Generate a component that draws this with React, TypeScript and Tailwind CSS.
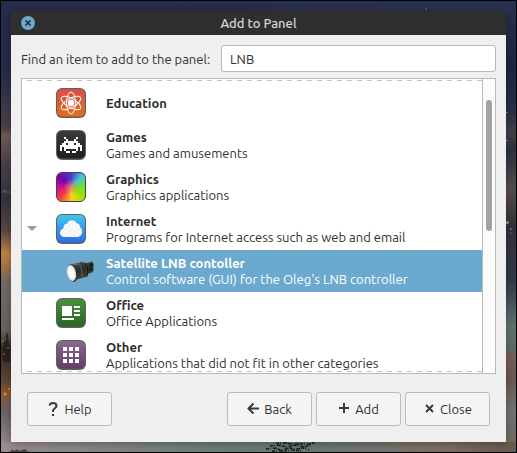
import { useState, type ReactNode } from "react";

function Tile({ id, from, to, children }: { id: string; from: string; to: string; children: ReactNode }) {
  return (
    <svg viewBox="0 0 30 30" className="h-[30px] w-[30px] shrink-0" aria-hidden="true">
      <defs>
        <linearGradient id={id} x1="0" y1="0" x2="0" y2="1">
          <stop offset="0" stopColor={from} />
          <stop offset="1" stopColor={to} />
        </linearGradient>
      </defs>
      <rect width="30" height="30" rx="6" fill="#2b2b2b" opacity="0.75" />
      <rect x="1" y="1" width="28" height="27.5" rx="5" fill={`url(#${id})`} />
      {children}
    </svg>
  );
}

function EducationIcon() {
  return (
    <Tile id="edu" from="#d5504a" to="#df6e1c">
      <g fill="none" stroke="#fff" strokeWidth="1">
        <ellipse cx="15" cy="15" rx="4.5" ry="11" />
        <ellipse cx="15" cy="15" rx="4.5" ry="11" transform="rotate(60 15 15)" />
        <ellipse cx="15" cy="15" rx="4.5" ry="11" transform="rotate(-60 15 15)" />
      </g>
      <circle cx="15" cy="15" r="3.2" fill="#fff" />
    </Tile>
  );
}

const INVADER = [
  "00100000100",
  "00010001000",
  "00111111100",
  "01101110110",
  "11111111111",
  "10111111101",
  "10100000101",
  "00011011000",
];

function GamesIcon() {
  return (
    <Tile id="games" from="#3a3a3a" to="#1f1f1f">
      <g fill="#fff" shapeRendering="crispEdges">
        {INVADER.flatMap((line, y) =>
          [...line].map((bit, x) =>
            bit === "1" ? <rect key={`${x}-${y}`} x={4 + x * 2} y={7 + y * 2} width="2" height="2" /> : null,
          ),
        )}
      </g>
    </Tile>
  );
}

function GraphicsIcon() {
  return (
    <div className="h-[30px] w-[30px] shrink-0 rounded-[6px] border border-[#444] bg-[radial-gradient(circle,#d98a70_0%,transparent_40%),conic-gradient(#4838cc,#45c4dc_45deg,#62e040_80deg,#98e400_130deg,#ffd424_175deg,#f0403c_225deg,#d8108c_265deg,#7800b0_310deg,#4838cc)]" />
  );
}

function InternetIcon() {
  return (
    <Tile id="net" from="#42c6ee" to="#2a6ee8">
      <path
        d="M8.5 23C5.8 23 4 21 4 18.7c0-2.2 1.5-3.8 3.400-4.300-.1-2.900 1.600-4.900 4-4.900.6-2 2.300-3.200 4.600-3.200 2.100 0 3.600 1 4.300 2.700 2.300.2 3.900 1.900 3.800 4.300 1.300.7 2 2.200 2 4.200 0 3.100-1.900 5.500-4.900 5.500z"
        fill="#f5f5f5"
      />
    </Tile>
  );
}

function SatelliteIcon() {
  return (
    <svg viewBox="0 0 30 30" className="h-[30px] w-[30px] shrink-0" aria-hidden="true">
      <defs>
        <linearGradient id="body" x1="0" y1="0" x2="0.3" y2="1">
          <stop offset="0" stopColor="#555852" />
          <stop offset="0.5" stopColor="#292b28" />
          <stop offset="1" stopColor="#454744" />
        </linearGradient>
        <radialGradient id="lens">
          <stop offset="0" stopColor="#fff" />
          <stop offset="0.7" stopColor="#f0f4f4" />
          <stop offset="1" stopColor="#c0c8ca" />
        </radialGradient>
      </defs>
      <path d="M4 8.500l8-1.500 3-1 6 1 5-1.500 1.500 1.500v8l-1.500 1.500-3.500 1-1 3-5.500 1.500-5 1.500-3 2.500z" fill="url(#body)" />
      <path d="M13 7.500l2.500 5.500.5 8" fill="none" stroke="#6d706b" strokeWidth="0.8" />
      <path d="M19 7.500l2.500 4v8" fill="none" stroke="#151615" strokeWidth="0.8" />
      <path d="M4 9.500l8-1.500" stroke="#81847e" strokeWidth="0.7" />
      <ellipse cx="25.500" cy="9" rx="1.100" ry="1.500" fill="#0c0c0c" />
      <ellipse cx="24.500" cy="13.500" rx="1.200" ry="1" fill="#0c0c0c" />
      <ellipse cx="6.300" cy="17" rx="5.100" ry="9" transform="rotate(-12 6.300 17)" fill="#30332f" />
      <ellipse cx="5.400" cy="17" rx="4.500" ry="8.300" transform="rotate(-12 5.400 17)" fill="url(#lens)" />
    </svg>
  );
}

function OfficeIcon() {
  return (
    <Tile id="office" from="#46913d" to="#2b6526">
      <path d="M6 8h10v10H6zM18 8h6v2h-6zM18 12h6v2h-6zM18 16h6v2h-6zM6 20h12v2H6z" fill="#fff" />
    </Tile>
  );
}

function OtherIcon() {
  return (
    <Tile id="other" from="#88698c" to="#653c69">
      <path
        d="M7 7h4v4H7zM13 7h4v4h-4zM19 7h4v4h-4zM7 13h4v4H7zM13 13h4v4h-4zM19 13h4v4h-4zM7 19h4v4H7zM13 19h4v4h-4zM19 19h4v4h-4z"
        fill="#fff"
      />
    </Tile>
  );
}

type Item = { name: string; note?: string; icon: ReactNode; open?: boolean; child?: boolean };

const ITEMS: Item[] = [
  { name: "Education", icon: <EducationIcon /> },
  { name: "Games", note: "Games and amusements", icon: <GamesIcon /> },
  { name: "Graphics", note: "Graphics applications", icon: <GraphicsIcon /> },
  { name: "Internet", note: "Programs for Internet access such as web and email", icon: <InternetIcon />, open: true },
  {
    name: "Satellite LNB contoller",
    note: "Control software (GUI) for the Oleg's LNB controller",
    icon: <SatelliteIcon />,
    child: true,
  },
  { name: "Office", note: "Office Applications", icon: <OfficeIcon /> },
  { name: "Other", note: "Applications that did not fit in other categories", icon: <OtherIcon /> },
];

function Row({ item, selected, onSelect }: { item: Item; selected: boolean; onSelect: () => void }) {
  return (
    <li
      role="treeitem"
      aria-selected={selected}
      aria-expanded={item.open}
      onClick={onSelect}
      className={`flex h-[42px] shrink-0 items-center ${selected ? "bg-[#6ba9cf] text-white" : ""}`}
    >
      <span className="flex w-[34px] shrink-0 pl-[5px]">
        {item.open && (
          <svg viewBox="0 0 10 6" className="h-[6px] w-[10px]" aria-hidden="true">
            <path d="M0 0h10L5 5z" fill="#999" />
          </svg>
        )}
      </span>
      <span className={`flex w-[50px] shrink-0 ${item.child ? "pl-[10px]" : ""}`}>{item.icon}</span>
      <span className="flex min-w-0 flex-col whitespace-nowrap leading-4">
        <span className="font-bold">{item.name}</span>
        {item.note && <span>{item.note}</span>}
      </span>
    </li>
  );
}

function ActionButton({ icon, label }: { icon: ReactNode; label: string }) {
  return (
    <button
      type="button"
      className="flex h-[34px] w-[85px] items-center justify-center gap-[5px] rounded-[3px] border border-[#bcbcbc] bg-[#f5f5f5]"
    >
      <svg viewBox="0 0 12 14" className="h-[14px] w-[12px]" fill="none" stroke="#3a3a3a" strokeWidth="2" aria-hidden="true">
        {icon}
      </svg>
      {label}
    </button>
  );
}

function Wallpaper() {
  return (
    <svg viewBox="0 0 517 453" preserveAspectRatio="none" className="absolute inset-0 h-full w-full" aria-hidden="true">
      <defs>
        <linearGradient id="west" x1="0" y1="0" x2="0" y2="1">
          <stop offset="0" stopColor="#272d49" />
          <stop offset="0.15" stopColor="#242b46" />
          <stop offset="0.24" stopColor="#3b3b4d" />
          <stop offset="0.28" stopColor="#4b4044" />
          <stop offset="0.3" stopColor="#705b55" />
          <stop offset="0.36" stopColor="#494147" />
          <stop offset="0.44" stopColor="#333341" />
          <stop offset="0.51" stopColor="#5c4740" />
          <stop offset="0.56" stopColor="#bc8540" />
          <stop offset="0.59" stopColor="#a47440" />
          <stop offset="0.62" stopColor="#706b66" />
          <stop offset="0.73" stopColor="#67625b" />
          <stop offset="0.77" stopColor="#302a27" />
          <stop offset="0.84" stopColor="#5e4532" />
          <stop offset="0.87" stopColor="#8b5a36" />
          <stop offset="0.91" stopColor="#686369" />
          <stop offset="1" stopColor="#a29192" />
        </linearGradient>
        <linearGradient id="east" x1="0" y1="0" x2="0" y2="1">
          <stop offset="0" stopColor="#293150" />
          <stop offset="0.15" stopColor="#1c2541" />
          <stop offset="0.25" stopColor="#29304a" />
          <stop offset="0.29" stopColor="#414146" />
          <stop offset="0.33" stopColor="#29313e" />
          <stop offset="0.42" stopColor="#564c4d" />
          <stop offset="0.5" stopColor="#332f3d" />
          <stop offset="0.62" stopColor="#303a48" />
          <stop offset="0.72" stopColor="#5d7370" />
          <stop offset="0.76" stopColor="#5c6c6b" />
          <stop offset="0.79" stopColor="#765d56" />
          <stop offset="0.84" stopColor="#6a5850" />
          <stop offset="0.9" stopColor="#6d7470" />
          <stop offset="1" stopColor="#77685d" />
        </linearGradient>
        <linearGradient id="south">
          <stop offset="0" stopColor="#9b8c8f" />
          <stop offset="0.25" stopColor="#7d8283" />
          <stop offset="0.45" stopColor="#697c7a" />
          <stop offset="0.65" stopColor="#6b7773" />
          <stop offset="0.85" stopColor="#806e65" />
          <stop offset="1" stopColor="#67594f" />
        </linearGradient>
        <linearGradient id="sky">
          <stop offset="0" stopColor="#272d49" />
          <stop offset="1" stopColor="#293150" />
        </linearGradient>
      </defs>
      <rect width="260" height="453" fill="url(#west)" />
      <rect x="257" width="260" height="453" fill="url(#east)" />
      <rect width="517" height="11" fill="url(#sky)" />
      <rect y="442" width="517" height="11" fill="url(#south)" />
      <path d="M3 362v-14l1-1v-6h2v-6l1-3 1 3v6h1v6l1 1v14z" fill="#241d1a" opacity="0.8" />
      <g fill="#e9a04d" opacity="0.8">
        <circle cx="5" cy="394" r="1.5" />
        <circle cx="9" cy="389" r="1" />
        <circle cx="3" cy="341" r="0.8" />
        <circle cx="8" cy="348" r="0.8" />
        <circle cx="4" cy="354" r="0.8" />
      </g>
      <path d="M2 192h2v-2h1v2h6" fill="none" stroke="#80597f" strokeWidth="0.8" />
      <g fill="#d3a59b" opacity="0.8">
        <circle cx="507" cy="112.500" r="0.8" />
        <circle cx="507" cy="140.500" r="0.8" />
        <circle cx="507.500" cy="222.500" r="1.500" />
        <circle cx="511" cy="229" r="0.8" />
        <circle cx="511" cy="233" r="0.6" />
        <circle cx="426" cy="9" r="1" fill="#5b6480" />
      </g>
      <g fill="none" stroke="#171c1d" strokeWidth="1.500" strokeDasharray="3 1 1 2 4 1">
        <path d="M276 443h10l5 1h20l4-2" />
        <path d="M270 446l8-1 9 2 8-2 9 2 7-2" />
        <path d="M266 449l9-1 6 2 8-2 7 1 8-1 5 2" />
        <path d="M272 451h12l7-1 11 1" />
      </g>
      <path d="M8 452l3-1 1-2 2 2 4-2 1 2 6-2 2 2 3 1z" fill="#3b3335" opacity="0.8" />
    </svg>
  );
}

const DASHES =
  "pointer-events-none absolute inset-x-0 h-px bg-[repeating-linear-gradient(90deg,transparent_0_5px,#c4c4c4_5px_10px)]";

export default function App() {
  const [query, setQuery] = useState("LNB");
  const [selected, setSelected] = useState(4);
  return (
    <div className="relative flex h-screen overflow-hidden p-[11px] font-['Ubuntu','Noto_Sans',sans-serif] text-[13px] leading-4 text-[#303030]">
      <Wallpaper />
      <div className="pointer-events-none absolute inset-0 border border-black" />
      <main className="relative flex min-w-0 flex-1 flex-col bg-[#efefef] shadow-[0_2px_8px_rgba(0,0,0,0.3)]">
        <header className="flex h-6 shrink-0 items-center bg-[#2f2f2f] px-[10px] text-[#d8d8d8]">
          <button type="button" aria-label="Close window" className="h-[14px] w-[14px]">
            <svg viewBox="0 0 14 14" className="h-[14px] w-[14px]">
              <circle cx="7" cy="7" r="7" fill="#6ba9cf" />
              <path d="M4.500 4.500l5 5m0-5l-5 5" stroke="#2f2f2f" strokeWidth="1.700" />
            </svg>
          </button>
          <h1 className="flex-1 pr-[14px] text-center font-medium">Add to Panel</h1>
        </header>
        <div className="flex min-h-0 flex-1 flex-col px-[10px] pt-[10px] pb-4">
          <div className="flex shrink-0 items-center gap-[6px]">
            <label htmlFor="find" className="w-[194px] shrink-0 whitespace-nowrap">
              Find an item to add to the panel:
            </label>
            <input
              id="find"
              value={query}
              onChange={(e) => setQuery(e.target.value)}
              className="h-[27px] min-w-0 flex-1 rounded-[3px] border border-[#b8b8b8] bg-white px-2 outline-none"
            />
          </div>
          <div className="relative mt-[6px] flex min-h-0 flex-1 border border-[#b8b8b8] bg-white">
            <div className="relative min-w-0 flex-1 overflow-hidden">
              <ul role="tree" aria-label="Panel items" className="flex flex-col pt-[3px]">
                {ITEMS.map((item, i) => (
                  <Row key={item.name} item={item} selected={i === selected} onSelect={() => setSelected(i)} />
                ))}
              </ul>
              <div className={`${DASHES} top-px`} />
              <div className={`${DASHES} bottom-px`} />
            </div>
            <div className="flex w-[13px] shrink-0 justify-center border-l border-[#b8b8b8] bg-[#fcfcfc] pt-[21px]">
              <div className="h-[131px] w-[6px] rounded-full bg-[#a2a2a2]" />
            </div>
          </div>
          <div className="mt-[18px] flex shrink-0 gap-1 px-[6px]">
            <ActionButton label="Help" icon={<path d="M2.500 3.500C3 1.500 4.500 1 6 1c2 0 3.500 1 3.500 3S6 6.500 6 9v1M6 12v2" />} />
            <div className="flex-1" />
            <ActionButton label="Back" icon={<path d="M12 6.500H1.500M6.500 1.500l-5 5 5 5" />} />
            <ActionButton label="Add" icon={<path d="M6 1v10M1 6h10" />} />
            <ActionButton label="Close" icon={<path d="M3 3l7 7M10 3l-7 7" />} />
          </div>
        </div>
      </main>
    </div>
  );
}
